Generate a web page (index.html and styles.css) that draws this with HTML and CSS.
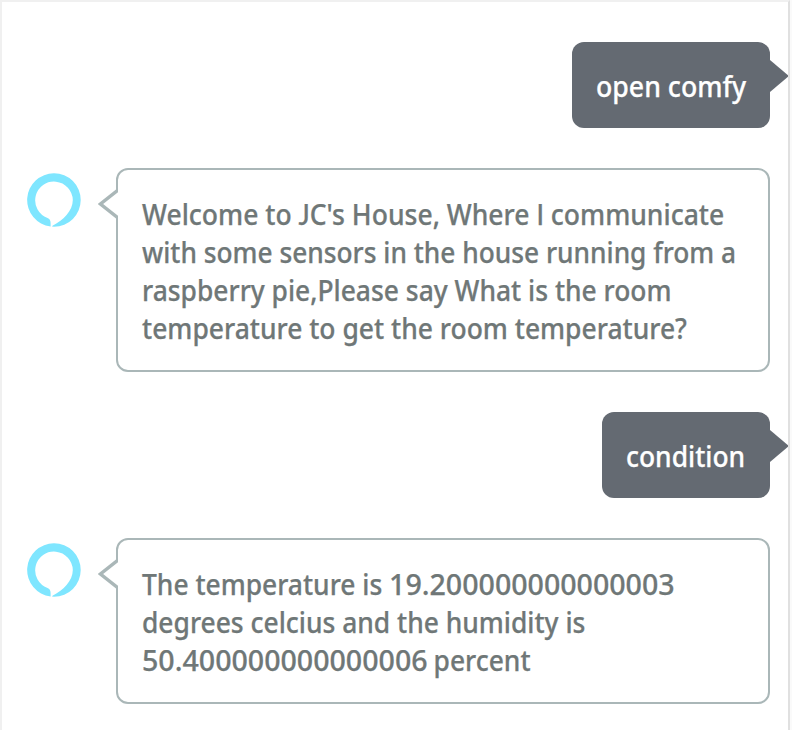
FILE: index.html
```
<!DOCTYPE html>
<html>
<head>
  <meta charset="utf-8">
  <title>Alexa Simulator</title>
  <link rel="stylesheet" href="styles.css">
</head>
<body>
  <div class="chat">
    <div class="request">
      <span class="line open">open comfy</span>
      <svg class="arrow-right" width="19" height="32" viewBox="0 0 19 32"><path d="M0 0L19 16L0 32Z" fill="#646a72"/></svg>
    </div>

    <div class="response">
      <svg class="logo" width="54" height="54" viewBox="0 0 54 54"><path fill="#7fe6ff" d="M27 .3A26.7 26.7 0 0 0 23.6 53.5V50C23.6 47.2 22.6 45.8 20.5 45A18.8 18.8 0 1 1 45.8 27C45.8 38 36 47.5 25.5 52.8L25 53.6L27 53.7A26.7 26.7 0 0 0 27 .3Z"/></svg>
      <div class="bubble">
        <svg class="arrow-left" width="20" height="32" viewBox="0 0 20 32"><path d="M20 2L2 16L20 30Z" fill="#fff"/><path d="M20 2L2.5 16L20 30" fill="none" stroke="#aab7b8" stroke-width="3.4"/></svg>
        <span class="line l1">Welcome to <span class="plain">J</span>C's House, Where <span class="plain">I</span> communicate</span>
        <span class="line l2">with some sensors in the house running from a</span>
        <span class="line l3">raspberry pie,Please say What is the room</span>
        <span class="line l4">temperature to get the room temperature?</span>
      </div>
    </div>

    <div class="request">
      <span class="line condition">condition</span>
      <svg class="arrow-right" width="19" height="32" viewBox="0 0 19 32"><path d="M0 0L19 16L0 32Z" fill="#646a72"/></svg>
    </div>

    <div class="response">
      <svg class="logo" width="54" height="54" viewBox="0 0 54 54"><path fill="#7fe6ff" d="M27 .3A26.7 26.7 0 0 0 23.6 53.5V50C23.6 47.2 22.6 45.8 20.5 45A18.8 18.8 0 1 1 45.8 27C45.8 38 36 47.5 25.5 52.8L25 53.6L27 53.7A26.7 26.7 0 0 0 27 .3Z"/></svg>
      <div class="bubble">
        <svg class="arrow-left" width="20" height="32" viewBox="0 0 20 32"><path d="M20 2L2 16L20 30Z" fill="#fff"/><path d="M20 2L2.5 16L20 30" fill="none" stroke="#aab7b8" stroke-width="3.4"/></svg>
        <span class="line t1">The temperature is <span class="number">19.200000000000003</span></span>
        <span class="line t2">degrees celcius and the humidity is</span>
        <span class="line t3"><span class="number">50.400000000000006</span> percent</span>
      </div>
    </div>
  </div>
</body>
</html>
```
FILE: styles.css
```
body {
  margin: 0;
  background: #fafafa;
  font-family: "Noto Sans", "Open Sans", sans-serif;
  font-size: 28px;
  font-weight: 500;
  line-height: 38px;
}

.chat {
  box-sizing: border-box;
  display: flex;
  flex-direction: column;
  gap: 40px;
  width: 790px;
  height: 730px;
  padding: 40px 18px 0 25px;
  overflow: hidden;
  background: #fff;
  border: 2px solid #f0f0f0;
  border-right-color: #e0e0e0;
  border-bottom: 0;
}

.request {
  position: relative;
  align-self: flex-end;
  padding: 24px;
  background: #646a72;
  border-radius: 12px;
  color: #fff;
}

.arrow-right {
  position: absolute;
  top: 18px;
  left: 100%;
}

.response {
  display: flex;
  align-items: flex-start;
}

.logo {
  flex: none;
  margin: 5px 35px 0 0;
}

.bubble {
  position: relative;
  box-sizing: border-box;
  width: 654px;
  flex: none;
  padding: 24px;
  border: 2px solid #aab7b8;
  border-radius: 12px;
  color: #6f7777;
}

.arrow-left {
  position: absolute;
  top: 18px;
  left: -20px;
}

/* slightly condensed text */
.line {
  display: block;
  height: 38px;
  white-space: nowrap;
  transform: translateY(0.5px) scaleX(0.943);
  transform-origin: 0 0;
  -webkit-text-stroke: 0.25px currentColor;
}

.l1 { transform: translateY(0.5px) scaleX(0.947); }
.l2 { transform: translateY(0.5px) scaleX(0.939); }
.l4 { transform: translateY(0.5px) scaleX(0.945); }

.open {
  width: 150px;
  transform: translateY(0.5px) scaleX(0.953);
}

.condition { width: 120px; }

.plain {
  font-family: Lato, sans-serif;
  line-height: 1;
}

.number {
  display: inline-block;
  margin-right: 22px;
  transform: scaleX(1.082);
  transform-origin: 0 0;
}
```
